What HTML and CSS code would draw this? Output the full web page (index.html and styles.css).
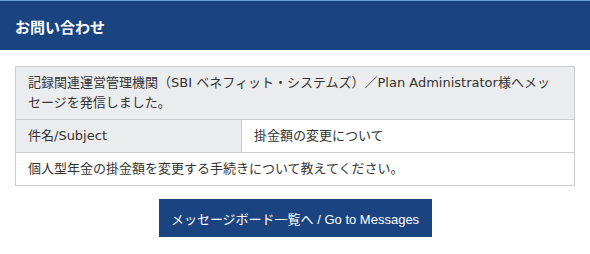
FILE: index.html
```html
<!DOCTYPE html>
<html lang="ja">
<head>
<meta charset="utf-8">
<link rel="stylesheet" href="styles.css">
</head>
<body>
<header class="page-header">
  <h1 class="page-title">お問い合わせ</h1>
</header>
<main class="content">
  <table class="info-table">
    <tr class="row-notice">
      <td colspan="2">記録関連運営管理機関（SBI ベネフィット・システムズ）／Plan Administrator様へメッセージを発信しました。</td>
    </tr>
    <tr>
      <th class="label-cell">件名/Subject</th>
      <td>掛金額の変更について</td>
    </tr>
    <tr>
      <td colspan="2">個人型年金の掛金額を変更する手続きについて教えてください。</td>
    </tr>
  </table>
  <div class="actions">
    <a class="btn-primary" href="#">メッセージボード一覧へ / Go to Messages</a>
  </div>
</main>
</body>
</html>
```

FILE: styles.css
```css
html, body {
  margin: 0;
  padding: 0;
  background: #ffffff;
}
body {
  font-family: "DejaVu Sans", "Noto Sans CJK JP", sans-serif;
  color: #333333;
}
.page-header {
  background: #1a4480;
  border-top: 1px solid #6b9fd8;
  height: 49px;
  display: flex;
  align-items: center;
  padding: 0 15px;
}
.page-title {
  margin: 0;
  font-family: "Noto Sans CJK JP", sans-serif;
  font-size: 15px;
  font-weight: 700;
  color: #ffffff;
  line-height: 1;
  padding-top: 2px;
}
.content {
  padding: 16px 15px 0 15px;
}
.info-table {
  width: 560px;
  border-collapse: collapse;
  font-size: 13px;
  line-height: 20px;
}
.info-table td, .info-table th {
  border: 1px solid #cccccc;
  padding: 6px 12px;
  text-align: left;
  font-weight: normal;
  vertical-align: middle;
}
.row-notice td {
  background: #ebecee;
}
.label-cell {
  background: #ebecee;
  width: 201px;
}
.actions {
  display: flex;
  justify-content: center;
  padding-top: 13px;
}
.btn-primary {
  display: flex;
  align-items: center;
  justify-content: center;
  width: 273px;
  height: 38px;
  background: #1a4480;
  color: #ffffff;
  text-decoration: none;
  font-family: "Liberation Sans", "Noto Sans CJK JP", sans-serif;
  font-size: 13px;
}
```
